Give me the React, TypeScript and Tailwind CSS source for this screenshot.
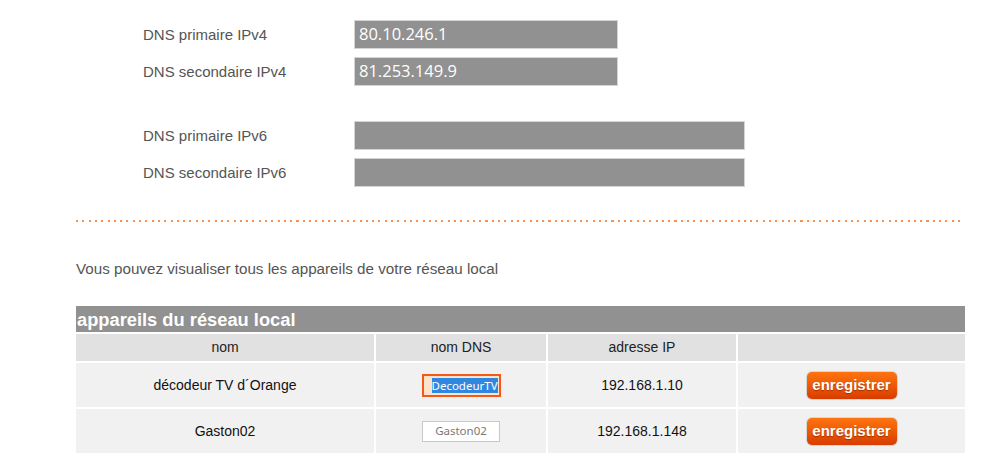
import React from 'react'

const dnsRows = [
  { label: 'DNS primaire IPv4', value: '80.10.246.1', wide: false },
  { label: 'DNS secondaire IPv4', value: '81.253.149.9', wide: false },
]

const dnsRowsV6 = [
  { label: 'DNS primaire IPv6', value: '', wide: true },
  { label: 'DNS secondaire IPv6', value: '', wide: true },
]

const devices = [
  { name: 'décodeur TV d´Orange', dns: 'DecodeurTV', ip: '192.168.1.10', focused: true },
  { name: 'Gaston02', dns: 'Gaston02', ip: '192.168.1.148', focused: false },
]

function DnsField({ label, value, wide }: { label: string; value: string; wide: boolean }) {
  return (
    <div className="flex items-center h-[29px]">
      <div className="w-[211px] text-[15px] text-[#555] pt-[2px]">{label}</div>
      <div
        className={`${wide ? 'w-[391px]' : 'w-[264px]'} h-[29px] bg-[#919191] border border-[#d4d4d4] flex items-center pl-[4px] text-white text-[16.5px] font-['Open_Sans',sans-serif]`}
      >
        {value}
      </div>
    </div>
  )
}

function SaveButton() {
  return (
    <div className="rounded-[6px] p-px bg-[#d6d6d6]">
      <div className="w-[90px] h-[27px] rounded-[5px] bg-gradient-to-b from-[#ff7410] to-[#d83c00] flex items-center justify-center text-white font-bold text-[15px] [text-shadow:0_1px_1px_rgba(120,30,0,0.6)]">
        enregistrer
      </div>
    </div>
  )
}

export default function App() {
  return (
    <div className="w-[999px] h-[458px] bg-white overflow-hidden font-['Liberation_Sans',Arial,sans-serif]">
      <div className="pt-[20px] pl-[143px] flex flex-col gap-[8px]">
        {dnsRows.map((r) => (
          <DnsField key={r.label} {...r} />
        ))}
      </div>
      <div className="pt-[35px] pl-[143px] flex flex-col gap-[8px]">
        {dnsRowsV6.map((r) => (
          <DnsField key={r.label} {...r} />
        ))}
      </div>

      <div className="mt-[33px] ml-[76px] w-[886px] h-[2px] bg-[repeating-linear-gradient(90deg,#f89252_0_2px,transparent_2px_6.3px)]" />

      <div className="ml-[76px] mt-[38px] text-[15.2px] text-[#555] leading-[18px]">
        Vous pouvez visualiser tous les appareils de votre réseau local
      </div>

      <div className="ml-[76px] mt-[28px] w-[889px]">
        <div className="h-[26px] bg-[#919191] text-white font-bold text-[18.3px] leading-[27px] pl-[1px]">
          appareils du réseau local
        </div>
        <div className="mt-[2px] grid grid-cols-[298px_170px_188px_227px] gap-x-[2px] gap-y-[2px] text-[14px]">
          {['nom', 'nom DNS', 'adresse IP', ''].map((h, i) => (
            <div key={i} className="h-[27px] bg-[#e1e1e1] flex items-center justify-center text-[#222]">
              {h}
            </div>
          ))}
          {devices.map((d) => (
            <React.Fragment key={d.name}>
              <div className="h-[44px] bg-[#f1f1f1] flex items-center justify-center text-[#111]">{d.name}</div>
              <div className="h-[44px] bg-[#f1f1f1] flex items-center justify-center">
                {d.focused ? (
                  <div className="w-[79px] h-[23px] border-2 border-[#f4591c] bg-[#fde3cc] flex items-center pl-[8px] font-['Noto_Sans',sans-serif] text-[11.5px]">
                    <span className="bg-[#2f87e0] text-white leading-[15px]">{d.dns}</span>
                  </div>
                ) : (
                  <div className="w-[78px] h-[21px] border border-[#c9c9c9] bg-white flex items-center justify-center font-['Noto_Sans',sans-serif] text-[11.5px] text-[#777]">
                    {d.dns}
                  </div>
                )}
              </div>
              <div className="h-[44px] bg-[#f1f1f1] flex items-center justify-center text-[#111]">{d.ip}</div>
              <div className="h-[44px] bg-[#f1f1f1] flex items-center justify-center">
                <SaveButton />
              </div>
            </React.Fragment>
          ))}
        </div>
      </div>
    </div>
  )
}
